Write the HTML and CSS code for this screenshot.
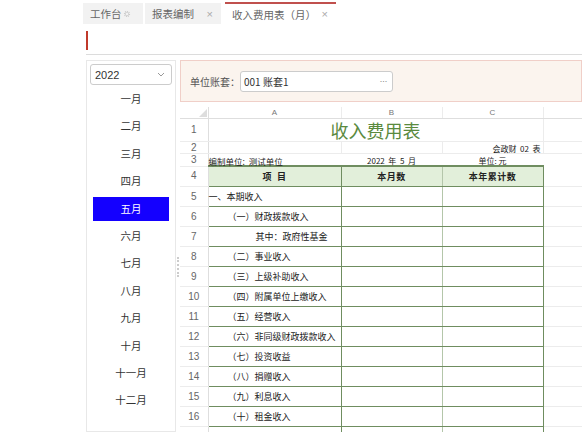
FILE: index.html
```html
<!DOCTYPE html>
<html lang="zh-CN">
<head>
    <meta charset="UTF-8">
    <title>收入费用表（月）</title>
    <link rel="stylesheet" href="styles.css">
</head>
<body>
<div class="app">
    <div class="nav-space"></div>
    <div class="main">
        <div class="tabs">
            <div class="tab">工作台 <span class="tab-icon gear">
                <svg width="8" height="8" viewBox="0 0 16 16"><circle cx="8" cy="8" r="5" fill="none" stroke="#ccc" stroke-width="2.4" stroke-dasharray="2.2 1.6"/><circle cx="8" cy="8" r="3.4" fill="none" stroke="#ccc" stroke-width="1.4"/></svg>
            </span></div>
            <div class="tab">报表编制 <span class="tab-icon">×</span></div>
            <div class="tab active">收入费用表（月） <span class="tab-icon">×</span></div>
        </div>

        <div class="toolbar"><span class="toolbar-mark"></span></div>

        <div class="content">
            <div class="months">
                <div class="year-select">
                    <span>2022</span>
                    <svg width="8" height="5" viewBox="0 0 8 5"><path d="M1 1 L4 4 L7 1" fill="none" stroke="#999" stroke-width="1"/></svg>
                </div>
                <ul class="month-list">
                    <li>一月</li>
                    <li>二月</li>
                    <li>三月</li>
                    <li>四月</li>
                    <li class="current">五月</li>
                    <li>六月</li>
                    <li>七月</li>
                    <li>八月</li>
                    <li>九月</li>
                    <li>十月</li>
                    <li>十一月</li>
                    <li>十二月</li>
                </ul>
            </div>

            <div class="splitter"><span class="grip"></span></div>

            <div class="report">
                <div class="filter">
                    <label>单位账套：</label>
                    <div class="filter-input">
                        <span>001 账套1</span>
                        <span class="dots">···</span>
                    </div>
                </div>

                <div class="sheet">
                    <table class="grid">
                        <colgroup>
                            <col class="c-head">
                            <col class="c-a">
                            <col class="c-b">
                            <col class="c-c">
                            <col class="c-d">
                        </colgroup>
                        <tr class="r-cols">
                            <th class="corner"><span class="corner-tri"></span></th>
                            <th>A</th>
                            <th>B</th>
                            <th>C</th>
                            <th></th>
                        </tr>
                        <tr class="r-title">
                            <th>1</th>
                            <td colspan="3" class="title">收入费用表</td>
                            <td></td>
                        </tr>
                        <tr class="r-small">
                            <th>2</th>
                            <td></td>
                            <td></td>
                            <td class="right">会政财&nbsp; 02&nbsp; 表</td>
                            <td></td>
                        </tr>
                        <tr class="r-small r-info">
                            <th>3</th>
                            <td>编制单位:&nbsp; 测试单位</td>
                            <td class="center">2022&nbsp; 年&nbsp; 5&nbsp; 月</td>
                            <td class="center">单位: 元</td>
                            <td></td>
                        </tr>
                        <tr class="r-data r-head">
                            <th>4</th>
                            <td class="t t-a center">项&nbsp; 目</td>
                            <td class="t t-b center">本月数</td>
                            <td class="t t-c center">本年累计数</td>
                            <td></td>
                        </tr>
                    </table>
                </div>
            </div>
        </div>
    </div>
</div>

<script>
    // row 17 sits under the fold, only its top edge shows
    var items = [
        ["一、本期收入", 0],
        ["（一）财政拨款收入", 1],
        ["其中：政府性基金", 2],
        ["（二）事业收入", 1],
        ["（三）上级补助收入", 1],
        ["（四）附属单位上缴收入", 1],
        ["（五）经营收入", 1],
        ["（六）非同级财政拨款收入", 1],
        ["（七）投资收益", 1],
        ["（八）捐赠收入", 1],
        ["（九）利息收入", 1],
        ["（十）租金收入", 1],
        ["", 1]
    ];

    var grid = document.querySelector(".grid");
    items.forEach(function (item, i) {
        var tr = document.createElement("tr");
        tr.className = "r-data";
        tr.innerHTML =
            "<th>" + (item[0] ? i + 5 : "") + "</th>" +
            "<td class='t t-a indent-" + item[1] + "'>" + item[0] + "</td>" +
            "<td class='t t-b'></td>" +
            "<td class='t t-c'></td>" +
            "<td></td>";
        grid.appendChild(tr);
    });
</script>
</body>
</html>
```

FILE: styles.css
```css
body {
    margin: 0;
    font-family: "Noto Sans CJK SC", "Liberation Sans", sans-serif;
    color: #333;
    background: #fff;
}

.app {
    display: flex;
    height: 439px;
    overflow: hidden;
}
.nav-space {
    width: 82px;
    flex-shrink: 0;
}
.main {
    flex: 1;
    display: flex;
    flex-direction: column;
    min-width: 0;
}

/* tabs */
.tabs {
    display: flex;
    height: 21px;
    padding: 3px 0 0 1px;
    gap: 2px;
}
.tab {
    display: flex;
    align-items: center;
    padding: 0 8px 0 7px;
    background: #f2f2f2;
    color: #666;
    font-size: 10.5px;
    white-space: nowrap;
}
.tab:nth-child(1) { width: 45px; }
.tab:nth-child(2) { width: 61px; }
.tab:nth-child(3) { width: 96px; margin-left: 2px; }
.tab.active {
    background: #fff;
    border-top: 2px solid #c0504d;
    margin-top: -1px;
}
.tab-icon {
    margin-left: auto;
    color: #aaa;
    font-size: 11px;
    font-family: "Liberation Sans", sans-serif;
}
.gear {
    display: flex;
    margin-right: 4px;
}

.toolbar {
    height: 30px;
    margin-left: 4px;
    border-bottom: 1px solid #dcdcdc;
    display: flex;
    align-items: center;
}
.toolbar-mark {
    width: 2px;
    height: 19px;
    background: #c0392b;
    margin-top: 3px;
}

/* body */
.content {
    display: flex;
    margin: 5px 0 0 4px;
    height: 372px;
    overflow: hidden;
}

.months {
    width: 88px;
    border: 1px solid #e8e8e8;
    flex-shrink: 0;
}
.year-select {
    margin: 3px 3px 0;
    height: 19px;
    border: 1px solid #ccc;
    border-radius: 3px;
    display: flex;
    align-items: center;
    justify-content: space-between;
    padding: 0 6px 0 4px;
    font-family: "Liberation Sans", sans-serif;
    font-size: 11px;
    color: #333;
}
.month-list {
    list-style: none;
    margin: 0;
    padding: 2px 0 0;
}
.month-list li {
    height: 24px;
    line-height: 24px;
    margin: 0 6px 3.4px;
    text-align: center;
    font-size: 10.5px;
    color: #333;
}
.month-list li.current {
    background: #1400ff;
    color: #fff;
}

.splitter {
    width: 4px;
    flex-shrink: 0;
    padding-top: 197px;
    box-sizing: border-box;
}
.grip {
    display: block;
    width: 0;
    height: 20px;
    margin-left: 1px;
    border-left: 2px dotted #ccc;
}

.report {
    flex: 1;
    display: flex;
    flex-direction: column;
    min-width: 0;
    min-height: 0;
}
.filter {
    height: 40px;
    background: #fbf4ee;
    border: 1px solid #f0cfc8;
    display: flex;
    align-items: center;
    padding-left: 9px;
    flex-shrink: 0;
}
.filter label {
    font-size: 10px;
    color: #555;
}
.filter-input {
    width: 143px;
    height: 19px;
    background: #fff;
    border: 1px solid #ccc;
    border-radius: 3px;
    display: flex;
    align-items: center;
    justify-content: space-between;
    padding: 0 5px 0 3px;
    font-size: 10px;
    color: #333;
}
.dots {
    color: #888;
    font-size: 9px;
    font-family: "Liberation Sans", sans-serif;
    letter-spacing: -0.5px;
}

/* spreadsheet */
.sheet {
    margin-top: 5px;
    flex: 1;
    min-height: 0;
    overflow: hidden;
}
.grid {
    border-collapse: collapse;
    table-layout: fixed;
    width: 402px;
    font-size: 9px;
}
.c-head { width: 28px; }
.c-a { width: 133px; }
.c-b { width: 101px; }
.c-c { width: 101px; }
.c-d { width: 39px; }

.grid th,
.grid td {
    padding: 0;
    border: 1px solid #ececec;
    white-space: nowrap;
    overflow: visible;
    line-height: 1;
}
.grid th {
    font-weight: normal;
    color: #666;
    font-family: "Liberation Sans", sans-serif;
    font-size: 10px;
    text-align: center;
    background: #fff;
}
.r-cols th {
    height: 11px;
    font-size: 8px;
    color: #777;
    border-top: none;
    border-bottom-color: #dedede;
}
.corner {
    position: relative;
}
.corner-tri {
    position: absolute;
    right: 1px;
    bottom: 1px;
    width: 0;
    height: 0;
    border-left: 8px solid transparent;
    border-bottom: 8px solid #ddd;
}
.grid tr > th:first-child {
    border-left: none;
    border-right-color: #dedede;
}

.r-title th,
.r-title td { height: 22px; }
.title {
    text-align: center;
    font-size: 18px;
    color: #5a8a3e;
    border-right-color: #ececec;
}
.r-small th,
.r-small td { height: 11px; }
.r-small td { font-size: 8px; color: #222; vertical-align: bottom; }
.r-info td { border-color: transparent; }
.r-info td:first-of-type { font-size: 8.5px; }

.right { text-align: right; padding-right: 2px !important; }
.center { text-align: center; }

.r-data th,
.r-data td { height: 19px; }
.grid .t {
    border: 1px solid #6f8d60;
    color: #222;
}
.grid .t-b { border-right-color: #b4c6aa; }
.grid .t-c { border-left-color: #b4c6aa; }
.r-head .t {
    background: #e2efda;
    font-weight: bold;
    border-top: 2px solid #6f8d60;
    letter-spacing: 0.5px;
}
.indent-1 { padding-left: 19px !important; }
.indent-2 { padding-left: 47px !important; }
```
